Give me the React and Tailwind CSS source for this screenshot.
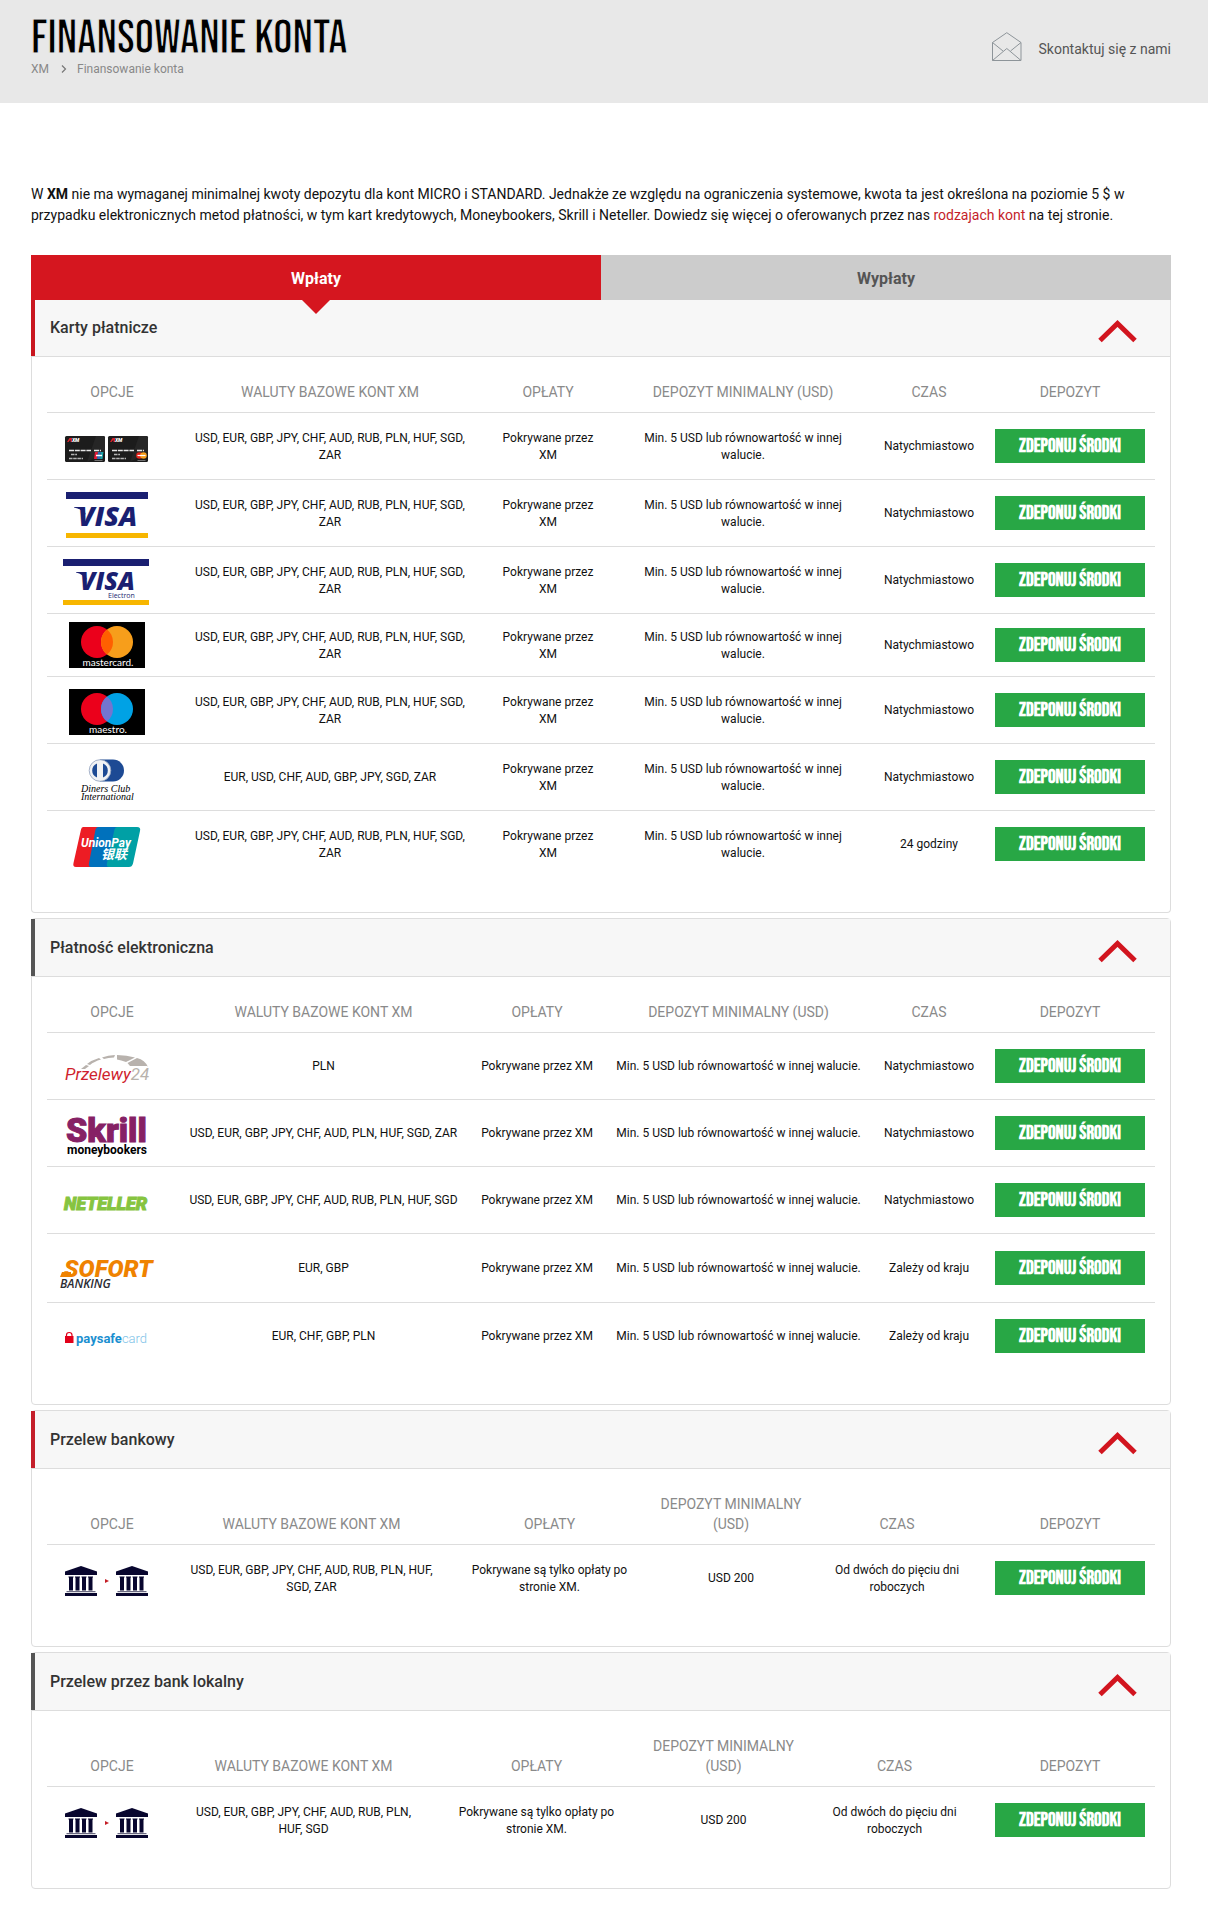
import React, { useState } from "react";

const USD_ALL = "USD, EUR, GBP, JPY, CHF, AUD, RUB, PLN, HUF, SGD, ZAR";
const FEES = "Pokrywane przez XM";
const MIN5 = "Min. 5 USD lub równowartość w innej walucie.";
const NOW = "Natychmiastowo";

function Logo({ label, children }) {
  return (
    <svg role="img" aria-label={label} width="100" height="50" viewBox="0 0 100 50" className="block overflow-visible">
      {children}
    </svg>
  );
}

function MiniCard({ x, brand }) {
  return (
    <g transform={`translate(${x} 15)`}>
      <rect width="40" height="26" rx="1.5" fill="#1c1c1c" />
      <path d="M22 26 L31 0 H38.500 Q40 0 40 1.500 V16 Z" fill="#262626" />
      <path d="M2 6 L4.500 2 H7 V6 H5.500 V3.500 L3.500 6 Z" fill="#d8232a" />
      <text x="7" y="6" className="fill-white font-[Roboto] text-[5px] font-black italic">XM</text>
      <path d="M4 14.500 H26 M29 14.500 H36" stroke="#e6e6e6" strokeWidth="1.500" strokeDasharray="5 0.800" />
      <path d="M6 18.500 H12 M4 22.500 H18" stroke="#b5b5b5" strokeWidth="1.300" strokeDasharray="3.500 0.700" />
      {brand === "union" ? (
        <g>
          <path d="M30 16 h3 l-1 7 h-3z" fill="#e21836" />
          <path d="M33 16 h3 l-1 7 h-3z" fill="#2a6fb5" />
          <path d="M36 16 h2.500 l-1 7 h-2.500z" fill="#1aa0a5" />
          <path d="M31 19.500 h6" stroke="#fff" strokeWidth="1.500" />
        </g>
      ) : (
        <g>
          <circle cx="31.500" cy="19.500" r="3.300" fill="#e2231a" />
          <circle cx="35.500" cy="19.500" r="3.300" fill="#f79e1b" />
          <path d="M29.500 19.500 h8" stroke="#fff" strokeWidth="1.200" />
        </g>
      )}
      <path d="M29.500 24.500 h8" stroke="#888" strokeWidth="0.800" />
    </g>
  );
}

function Bank({ x }) {
  return (
    <g transform={`translate(${x} 13)`} fill="#08062e">
      <path d="M16 0 L32 5.500 V9 H0 V5.500 Z" />
      <path d="M3.500 10.500 h5 v1 h-0.500 v13 h-4 v-13 h-0.500z" />
      <path d="M10 10.500 h5 v1 h-0.500 v13 h-4 v-13 h-0.500z" />
      <path d="M16.500 10.500 h5 v1 h-0.500 v13 h-4 v-13 h-0.500z" />
      <path d="M23 10.500 h5 v1 h-0.500 v13 h-4 v-13 h-0.500z" />
      <path d="M1.500 25 h29 v1.200 h-29z" opacity="0.6" />
      <path d="M0 27 h32 v3 h-32z" />
    </g>
  );
}

const LOGOS = {
  xm: (
    <Logo label="Karty XM">
      <MiniCard x={8} brand="union" />
      <MiniCard x={51} brand="master" />
    </Logo>
  ),
  visa: (
    <Logo label="Visa">
      <path d="M9 4 h82 v7 h-82z" fill="#1a1f71" />
      <path d="M9 45 h82 v5 h-82z" fill="#f7b600" />
      <path d="M17 19 h9 l3 8 q-4 -6 -12 -7.500z" fill="#1a1f71" />
      <text x="21" y="38" className="fill-[#1a1f71] font-['Open_Sans'] text-[27px] font-extrabold italic">VISA</text>
    </Logo>
  ),
  electron: (
    <Logo label="Visa Electron">
      <path d="M6 4 h86 v7 h-86z" fill="#1a1f71" />
      <path d="M6 45 h86 v5 h-86z" fill="#f7b600" />
      <path d="M19 17 h8 l3 8 q-4 -6 -11 -7.500z" fill="#1a1f71" />
      <text x="23" y="35" className="fill-[#1a1f71] font-['Open_Sans'] text-[25px] font-extrabold italic">VISA</text>
      <text x="51" y="43" className="fill-[#1a1f71] font-['Open_Sans'] text-[7px]">Electron</text>
    </Logo>
  ),
  mastercard: (
    <Logo label="Mastercard">
      <path d="M12 2 h76 v46 h-76z" fill="#000" />
      <circle cx="40" cy="22" r="16" fill="#eb001b" />
      <circle cx="60" cy="22" r="16" fill="#f79e1b" />
      <path d="M50 9.500 A16 16 0 0 1 50 34.500 A16 16 0 0 1 50 9.500Z" fill="#ff5f00" />
      <text x="51" y="46" textAnchor="middle" className="fill-white font-[Lato] text-[10px]">mastercard.</text>
    </Logo>
  ),
  maestro: (
    <Logo label="Maestro">
      <path d="M12 4 h76 v46 h-76z" fill="#000" />
      <circle cx="40" cy="24" r="16" fill="#eb001b" />
      <circle cx="60" cy="24" r="16" fill="#00a2e5" />
      <path d="M50 11.500 A16 16 0 0 1 50 36.500 A16 16 0 0 1 50 11.500Z" fill="#7375cf" />
      <text x="51" y="48" textAnchor="middle" className="fill-white font-[Lato] text-[10px]">maestro.</text>
    </Logo>
  ),
  diners: (
    <Logo label="Diners Club International">
      <path d="M43 7.500 H56 A11 11 0 0 1 56 29.500 H43Z" fill="#1d4a94" />
      <circle cx="43" cy="18.500" r="10.800" fill="#f1f2f4" stroke="#8fa0bd" strokeWidth="0.800" />
      <path d="M40 11.500 A7.500 7.500 0 0 0 40 25.500Z M46 11.500 A7.500 7.500 0 0 1 46 25.500Z" fill="#1d4a94" />
      <text x="24" y="40" className="fill-black font-['Liberation_Serif'] text-[10px] italic">Diners Club</text>
      <text x="24" y="48" className="fill-black font-['Liberation_Serif'] text-[10px] italic">International</text>
    </Logo>
  ),
  unionpay: (
    <Logo label="UnionPay">
      <path d="M26 8 H44 L35 48 H19 Q15.500 48 16.500 44 L24 10.500 Q24.500 8 26 8Z" fill="#ed1c24" />
      <path d="M41 8 H62 L53 48 H34 Q31 48 32 44 L38.500 10.500 Q39 8 41 8Z" fill="#0071bc" />
      <path d="M60 8 H80 Q84 8 83 12 L76 44.500 Q75 48 72 48 H52 Q49 48 50 44 L57.500 10.500 Q58 8 60 8Z" fill="#00a0a5" />
      <text x="24" y="28" className="fill-white font-[Roboto] text-[12px] font-bold italic">UnionPay</text>
      <text x="44" y="40" className="fill-white font-['Noto_Sans_CJK_SC'] text-[13px] font-bold italic">银联</text>
    </Logo>
  ),
  przelewy: (
    <Logo label="Przelewy24">
      <g fill="#b8b2ad">
        <path d="M24 28 L29 24 L32 25 L28 28Z" />
        <path d="M30 23 Q35 19 42 17 L44 18.500 Q37 20.500 33 24Z" />
        <path d="M45 16.500 Q51 14 58 14 L57 16.500 Q51 16.500 47 18Z" />
        <path d="M60 14 Q70 14 78 16.500 L69 21 Q64 19 60 18.500Z" />
        <path d="M80 17 Q88 19 91 26 L90 25 H73 L70.500 22Z" />
      </g>
      <text x="8" y="39" className="fill-[#cf1f2e] font-[Roboto] text-[17px] italic">
        Przelewy<tspan className="fill-[#b8b2ad]">24</tspan>
      </text>
    </Logo>
  ),
  skrill: (
    <Logo label="Skrill Moneybookers">
      <text x="9" y="34" className="fill-[#862165] stroke-[#862165] font-[Roboto] text-[34px] font-black">Skrill</text>
      <text x="10" y="46" className="fill-black font-[Roboto] text-[12px] font-bold">moneybookers</text>
    </Logo>
  ),
  neteller: (
    <Logo label="Neteller">
      <text x="7" y="35" className="fill-[#86c440] stroke-[#86c440] font-[Roboto] text-[18px] font-black italic">NETELLER</text>
    </Logo>
  ),
  sofort: (
    <Logo label="Sofort Banking">
      <path d="M5 29 H14 V34 H3Z" fill="#ef8200" />
      <text x="7" y="34" className="fill-[#ef8200] font-[Roboto] text-[24px] font-black italic">SOFORT</text>
      <text x="3" y="45" className="fill-[#2b2b33] font-['Open_Sans'] text-[12px] font-semibold italic">BANKING</text>
    </Logo>
  ),
  paysafe: (
    <Logo label="paysafecard">
      <path d="M8 25 H16.500 V32 H8Z" fill="#e2001a" />
      <path d="M9.500 25 V24 Q9.500 21.500 12.200 21.500 Q15 21.500 15 24 V25" fill="none" stroke="#e2001a" strokeWidth="1.200" />
      <text x="19" y="32" className="fill-[#1b8fd0] font-[Roboto] text-[13px] font-bold">
        paysafe<tspan className="fill-[#7fc3e8] font-light">card</tspan>
      </text>
    </Logo>
  ),
  bank: (
    <Logo label="Przelew bankowy">
      <Bank x={8} />
      <path d="M48 26 L52 28 L48 30Z" fill="#c41e26" />
      <Bank x={59} />
    </Logo>
  ),
};

const SECTIONS = [
  {
    title: "Karty płatnicze",
    header: "border-[#c9161f] h-14",
    card: "rounded-b border-x border-b",
    cols: ["w-[130px]", "", "w-[130px]", "w-[260px]", "w-[112px]", "w-[170px]"],
    rows: [
      ["xm", USD_ALL, FEES, MIN5, NOW],
      ["visa", USD_ALL, FEES, MIN5, NOW],
      ["electron", USD_ALL, FEES, MIN5, NOW],
      ["mastercard", USD_ALL, FEES, MIN5, NOW, "h-[63px]"],
      ["maestro", USD_ALL, FEES, MIN5, NOW],
      ["diners", "EUR, USD, CHF, AUD, GBP, JPY, SGD, ZAR", FEES, MIN5, NOW],
      ["unionpay", USD_ALL, FEES, MIN5, "24 godziny"],
    ],
    pad: "px-4",
  },
  {
    title: "Płatność elektroniczna",
    header: "border-[#555555] h-[57px]",
    card: "mt-[5px] rounded border",
    cols: ["w-[130px]", "", "w-[134px]", "w-[269px]", "w-[112px]", "w-[170px]"],
    rows: [
      ["przelewy", "PLN", FEES, MIN5, NOW],
      ["skrill", "USD, EUR, GBP, JPY, CHF, AUD, PLN, HUF, SGD, ZAR", FEES, MIN5, NOW],
      ["neteller", "USD, EUR, GBP, JPY, CHF, AUD, RUB, PLN, HUF, SGD", FEES, MIN5, NOW],
      ["sofort", "EUR, GBP", FEES, MIN5, "Zależy od kraju", "h-[69px]"],
      ["paysafe", "EUR, CHF, GBP, PLN", FEES, MIN5, "Zależy od kraju"],
    ],
    pad: "px-2",
  },
  {
    title: "Przelew bankowy",
    header: "border-[#c41e2a] h-[57px]",
    card: "mt-[5px] rounded border",
    cols: ["w-[130px]", "", "w-[207px]", "w-[156px]", "w-[176px]", "w-[170px]"],
    rows: [["bank", USD_ALL, "Pokrywane są tylko opłaty po stronie XM.", "USD 200", "Od dwóch do pięciu dni roboczych"]],
    pad: "px-5",
  },
  {
    title: "Przelew przez bank lokalny",
    header: "border-[#555555] h-[57px]",
    card: "mt-[5px] rounded border",
    cols: ["w-[130px]", "", "w-[213px]", "w-[161px]", "w-[181px]", "w-[170px]"],
    rows: [["bank", "USD, EUR, GBP, JPY, CHF, AUD, RUB, PLN, HUF, SGD", "Pokrywane są tylko opłaty po stronie XM.", "USD 200", "Od dwóch do pięciu dni roboczych"]],
    pad: "px-5",
  },
];

const HEADS = ["OPCJE", "WALUTY BAZOWE KONT XM", "OPŁATY", "DEPOZYT MINIMALNY (USD)", "CZAS", "DEPOZYT"];

function Section({ title, header, card, cols, rows, pad }) {
  const [open, setOpen] = useState(true);
  return (
    <section className={`${card} border-[#dddddd]`}>
      <h2 className={`-ml-px border-l-4 bg-[#f7f7f7] ${header}`}>
        <button
          type="button"
          aria-expanded={open}
          onClick={() => setOpen(!open)}
          className="flex h-full w-full cursor-pointer items-center justify-between pr-8 pl-[15px] text-left text-base font-medium text-[#333333]"
        >
          <span>{title}</span>
          <svg aria-hidden="true" width="40" height="24" viewBox="0 0 40 24" className={open ? "mt-2" : "mt-2 rotate-180"}>
            <path d="M2 20.500 L19.500 3.500 L37 20.500" fill="none" stroke="#d2151f" strokeWidth="5" />
          </svg>
        </button>
      </h2>
      {open && (
        <div className="border-t border-[#dddddd] px-[15px] pb-[35px]">
          <table className="w-full table-fixed border-separate border-spacing-0 text-center">
            <colgroup>
              {cols.map((c, i) => (
                <col key={i} className={c} />
              ))}
            </colgroup>
            <thead>
              <tr>
                {HEADS.map((h) => (
                  <th key={h} scope="col" className="border-b border-[#dddddd] px-1 pt-[25px] pb-2.5 align-bottom text-sm leading-5 font-normal text-[#8a8a8a]">
                    {h}
                  </th>
                ))}
              </tr>
            </thead>
            <tbody>
              {rows.map(([logo, currencies, fees, min, time, height], i) => {
                const last = i === rows.length - 1;
                const line = last ? "" : "border-b border-[#dddddd]";
                const cell = `${line} text-xs leading-[17px] text-[#111111] pt-px`;
                return (
                  <tr key={i} className={height || (last ? "h-[66px]" : "h-[67px]")}>
                    <td className={`${line} pl-2.5`}>{LOGOS[logo]}</td>
                    <td className={`${cell} px-2.5`}>{currencies}</td>
                    <td className={`${cell} ${pad}`}>{fees}</td>
                    <td className={`${cell} ${pad}`}>{min}</td>
                    <td className={`${cell} px-2`}>{time}</td>
                    <td className={`${line} px-2.5`}>
                      <button type="button" className="block h-[34px] w-full cursor-pointer bg-[#28a745] pt-0.5 font-['Bebas_Neue'] text-[19px] leading-8 font-bold text-white">
                        ZDEPONUJ ŚRODKI
                      </button>
                    </td>
                  </tr>
                );
              })}
            </tbody>
          </table>
        </div>
      )}
    </section>
  );
}

export default function App() {
  return (
    <div className="bg-white pb-[31px] font-[Roboto,sans-serif]">
      <header className="flex justify-between bg-[#e8e8e8] pt-[17px] pr-[37px] pb-[26px] pl-[31px]">
        <div>
          <h1 className="font-['Bebas_Neue',sans-serif] text-5xl leading-[44px] text-black [-webkit-text-stroke:1px_#e8e8e8]">FINANSOWANIE KONTA</h1>
          <nav aria-label="Okruszki" className="flex items-center text-xs text-[#888888]">
            <a href="#xm">XM</a>
            <svg aria-hidden="true" width="6" height="8" viewBox="0 0 6 8" className="mr-2.5 ml-3">
              <path d="M1 0.500 L4.500 4 L1 7.500" fill="none" stroke="#777777" strokeWidth="1.200" />
            </svg>
            <span>Finansowanie konta</span>
          </nav>
        </div>
        <a href="#kontakt" className="mt-[15px] flex h-[30px] items-end gap-4 text-sm text-[#555555]">
          <svg aria-hidden="true" width="30" height="30" viewBox="0 0 30 30" fill="none" stroke="#8d9499" strokeWidth="1">
            <path d="M0.500 10.500 L14.800 0.700 L29 10.500 V28.500 H0.500Z M0.500 10.500 L11 19 M29 10.500 L18.500 19 M0.500 28.500 L14.800 16.500 L29 28.500" />
          </svg>
          <span className="leading-[26px]">Skontaktuj się z nami</span>
        </a>
      </header>
      <main className="pt-[81px] pr-[37px] pl-[31px]">
        <p className="text-sm leading-[21px] text-[#111111]">
          W <strong>XM</strong> nie ma wymaganej minimalnej kwoty depozytu dla kont MICRO i STANDARD. Jednakże ze względu na ograniczenia systemowe, kwota ta jest określona na poziomie 5 $ w przypadku elektronicznych metod płatności, w tym kart kredytowych, Moneybookers, Skrill i Neteller. Dowiedz się więcej o oferowanych przez nas{" "}
          <a href="#konta" className="text-[#c41e2a]">rodzajach kont</a> na tej stronie.
        </p>
        <div role="tablist" className="mt-[29px] grid h-[45px] grid-cols-2 text-base">
          <button type="button" role="tab" aria-selected="true" className="relative bg-[#d5161f] pt-0.5 font-bold text-white">
            Wpłaty
            <svg aria-hidden="true" width="28" height="14" viewBox="0 0 28 14" className="absolute top-full left-1/2 -translate-x-1/2">
              <path d="M0 0 H28 L14 14Z" fill="#d5161f" />
            </svg>
          </button>
          <button type="button" role="tab" aria-selected="false" className="bg-[#cccccc] pt-0.5 font-bold text-[#555555]">
            Wypłaty
          </button>
        </div>
        {SECTIONS.map((s) => (
          <Section key={s.title} {...s} />
        ))}
      </main>
    </div>
  );
}
